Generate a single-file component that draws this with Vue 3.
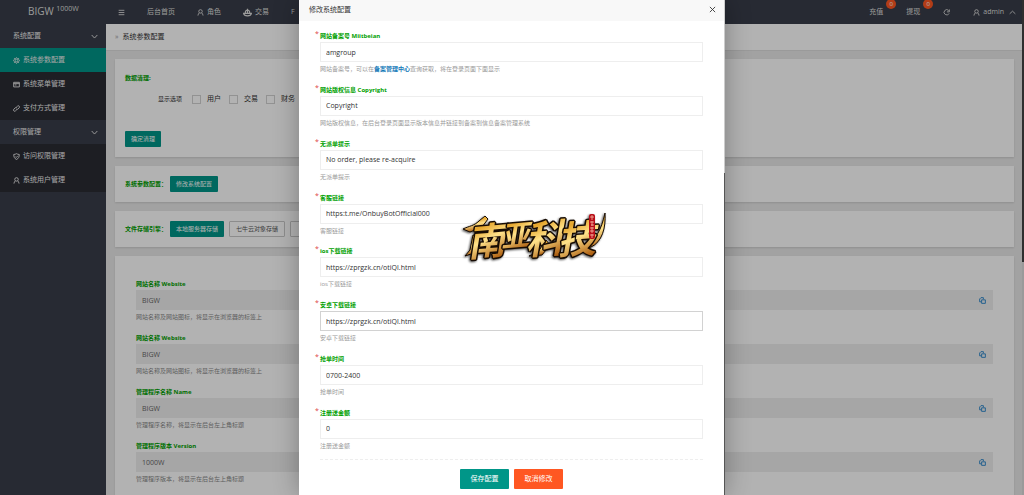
<script setup>
import { ref } from 'vue'

const groups = [
  { name: '系统配置', items: [
    { name: '系统参数配置', icon: 'gear', active: true },
    { name: '系统菜单管理', icon: 'window' },
    { name: '支付方式管理', icon: 'link' },
  ] },
  { name: '权限管理', items: [
    { name: '访问权限管理', icon: 'shield' },
    { name: '系统用户管理', icon: 'user' },
  ] },
]

const icons = {
  gear: 'M8 1.5l2 1.8 2.700 0 .3 2.500 1.800 2.200-1.800 2.200-.3 2.500-2.700 0-2 1.800-2-1.800-2.700 0-.3-2.500L1.200 8 3 5.800l.3-2.500 2.700 0zM8 5a3 3 0 1 0 0 6 3 3 0 0 0 0-6z',
  window: 'M1.500 3h13v10.500h-13zM1.500 6h13M4 9h4',
  link: 'M7 9.500a3 3 0 0 0 4 0l3-3a2.500 2.500 0 0 0-4-4L8.500 4M9 6.500a3 3 0 0 0-4 0l-3 3a2.500 2.500 0 0 0 4 4L7.500 12',
  shield: 'M8 1.500c2 1.300 4 1.800 6.300 1.800 0 5.500-1.300 9-6.300 11.500-5-2.500-6.300-6-6.300-11.500C4 3.300 6 2.800 8 1.500zM5 8l2.300 2.300L11 6.500',
  user: 'M8 1.500a4 4 0 1 0 0 8 4 4 0 0 0 0-8M5.500 8.800C3.500 10 2.500 12 2.200 15M10.500 8.800c2 1.200 3 3.200 3.300 6.200',
  scale: 'M1 9.500h14c-.5 3-3 4.500-7 4.500s-6.500-1.500-7-4.500zM8 1.500v8M4 9c0-4 1.500-5.500 4-5.500S12 5 12 9',
  menu: 'M1.500 3h13M1.500 8h13M1.500 13h13',
  refresh: 'M14 10a6 6 0 1 1-1-6.500M14.500 1v5.500H9',
  down: 'M1.500 4.500l6.500 7 6.500-7',
  up: 'M1.500 11L8 5l6.500 6',
  close: 'M2 2l12 12M14 2L2 14',
  copy: 'M5 11H1.500V4.500L4.500 1.500H10V5M6 6.500h8.500v8H6z',
}

const options = ref([
  { name: '用户', checked: false },
  { name: '交易', checked: false },
  { name: '财务', checked: false },
])

const params = [
  { name: '网站名称 Website', value: 'BIGW', help: '网站名称及网站图标，将显示在浏览器的标签上' },
  { name: '网站名称 Website', value: 'BIGW', help: '网站名称及网站图标，将显示在浏览器的标签上' },
  { name: '管理程序名称 Name', value: 'BIGW', help: '管理程序名称，将显示在后台左上角标题' },
  { name: '管理程序版本 Version', value: '1000W', help: '管理程序版本，将显示在后台左上角标题' },
]

const fields = ref([
  { name: '网站备案号 Miitbeian', value: 'amgroup', help: '网站备案号，可以在', link: '备案管理中心', rest: '查询获取，将在登录页面下面显示' },
  { name: '网站版权信息 Copyright', value: 'Copyright', help: '网站版权信息，在后台登录页面显示版本信息并链接到备案到信息备案管理系统' },
  { name: '无派单提示', value: 'No order, please re-acquire', help: '无派单提示' },
  { name: '客服链接', value: 'https:t.me/OnbuyBotOfficial000', help: '客服链接' },
  { name: 'ios下载链接', value: 'https://zprgzk.cn/otiQl.html', help: 'ios下载链接' },
  { name: '安卓下载链接', value: 'https://zprgzk.cn/otiQl.html', help: '安卓下载链接', focus: true },
  { name: '抢单时间', value: '0700-2400', help: '抢单时间' },
  { name: '注册送金额', value: '0', help: '注册送金额' },
])
</script>

<template>
  <div class="app">
    <aside class="side">
      <div class="brand">BIGW <sup>1000W</sup></div>
      <nav>
        <section v-for="g in groups" :key="g.name">
          <button class="group" type="button">{{ g.name }}
            <svg class="icon" viewBox="0 0 16 16"><path :d="icons.down" /></svg>
          </button>
          <a v-for="i in g.items" :key="i.name" href="#" class="item" :class="{ active: i.active }">
            <svg class="icon" viewBox="0 0 16 16"><path :d="icons[i.icon]" /></svg>{{ i.name }}
          </a>
        </section>
      </nav>
    </aside>

    <div class="main">
      <header class="top">
        <button type="button" class="toggle" aria-label="菜单"><svg class="icon" viewBox="0 0 16 16"><path :d="icons.menu" /></svg></button>
        <a href="#">后台首页</a>
        <a href="#"><svg class="icon" viewBox="0 0 16 16"><path :d="icons.user" /></svg>角色</a>
        <a href="#"><svg class="icon wide" viewBox="0 0 16 16"><path :d="icons.scale" /></svg>交易</a>
        <a href="#">F</a>
        <div class="tools">
          <a href="#" class="counted">充值<span class="badge">0</span></a>
          <a href="#" class="counted">提现<span class="badge">0</span></a>
          <button type="button" aria-label="刷新"><svg class="icon" viewBox="0 0 16 16"><path :d="icons.refresh" /></svg></button>
          <a href="#" class="account"><svg class="icon" viewBox="0 0 16 16"><path :d="icons.user" /></svg>admin<svg class="icon caret" viewBox="0 0 16 16"><path :d="icons.up" /></svg></a>
        </div>
      </header>
      <div class="crumb"><span>»</span>系统参数配置</div>

      <div class="content">
        <section class="card">
          <h2>数据清理:</h2>
          <div class="options">
            <span class="caption">显示选项</span>
            <label v-for="o in options" :key="o.name"><input v-model="o.checked" type="checkbox">{{ o.name }}</label>
          </div>
          <button type="button" class="btn">确定清理</button>
        </section>
        <section class="card line">
          <h2>系统参数配置：</h2>
          <button type="button" class="btn">修改系统配置</button>
        </section>
        <section class="card line">
          <h2>文件存储引擎：</h2>
          <button type="button" class="btn">本地服务器存储</button>
          <button type="button" class="btn plain">七牛云对象存储</button>
          <button type="button" class="btn plain more" aria-label="更多"></button>
        </section>
        <section class="card params">
          <div v-for="(p, n) in params" :key="n" class="field">
            <label :for="'param' + n">{{ p.name }}</label>
            <div class="locked">
              <input :id="'param' + n" type="text" :value="p.value" readonly>
              <button type="button" aria-label="复制"><svg class="icon" viewBox="0 0 16 16"><path :d="icons.copy" /></svg></button>
            </div>
            <p>{{ p.help }}</p>
          </div>
        </section>
      </div>
    </div>
    <div class="page-bar"><i></i></div>

    <div class="shade">
      <div class="modal" role="dialog" aria-labelledby="dialog-title">
        <div class="modal-head">
          <h1 id="dialog-title">修改系统配置</h1>
          <button type="button" aria-label="关闭"><svg class="icon" viewBox="0 0 16 16"><path :d="icons.close" /></svg></button>
        </div>
        <form @submit.prevent>
          <div class="fields">
            <div v-for="(f, n) in fields" :key="n" class="field required">
              <label :for="'field' + n">{{ f.name }}</label>
              <input :id="'field' + n" v-model="f.value" type="text" :class="{ focus: f.focus }">
              <p>{{ f.help }}<a v-if="f.link" href="#">{{ f.link }}</a>{{ f.rest }}</p>
            </div>
          </div>
          <div class="actions">
            <button type="submit" class="btn large">保存配置</button>
            <button type="button" class="btn large cancel">取消修改</button>
          </div>
        </form>
        <div class="modal-bar"><i></i></div>

        <svg class="mark" viewBox="0 0 150 54" role="img" aria-label="南亚科技">
          <defs>
            <linearGradient id="gold" x1="0" y1="0" x2="0.300" y2="1">
              <stop offset="0" stop-color="#fff0a0" />
              <stop offset="0.350" stop-color="#e5a52c" />
              <stop offset="0.600" stop-color="#ffe28a" />
              <stop offset="1" stop-color="#a9590c" />
            </linearGradient>
          </defs>
          <g class="strokes">
            <path d="M3 20c6-3 11-3 16-8l6-5 3 3-6 8-12 5z" />
            <path d="M13 26l-3 15-5 6 9-3 4-16z" />
            <path d="M86 31l-8 12-9 4 13-1 8-10z" />
            <path d="M145 4c1 15-3 29-14 34l-18 7 13-10c10-5 15-13 19-31z" />
          </g>
          <g class="glyphs">
            <text x="7" y="46" font-size="38" transform="rotate(-5 27 32)">南</text>
            <text x="41" y="37" font-size="29" transform="rotate(-5 58 28)">亚</text>
            <text x="65" y="44" font-size="39" transform="rotate(-4 87 30)">科</text>
            <text x="97" y="44" font-size="38" transform="rotate(-4 120 31)">技</text>
          </g>
          <rect x="129" y="5" width="6" height="25" rx="2" fill="#b80d18" />
          <path class="seal" d="M130 8h4M132 6v5M130 13h4M131 16h3M132 12v5M130 19h4M130 22h4M132 18v6M130 26h4M132 25v4" />
        </svg>
      </div>
    </div>
  </div>
</template>

<style>
body { margin: 0; overflow: hidden; }
</style>

<style scoped>
* { box-sizing: border-box; }
.app {
  display: flex;
  position: relative;
  height: 100vh;
  overflow: hidden;
  background: #e9e9e9;
  color: #333;
  font: 7px/10px "Open Sans", "Noto Sans CJK SC", sans-serif;
}
button, input { font: inherit; color: inherit; margin: 0; }
button { padding: 0; border: 0; background: none; }
a { color: inherit; text-decoration: none; }
h1, h2, p { margin: 0; font: inherit; }
.icon { width: 7px; height: 7px; flex: none; fill: none; stroke: currentColor; stroke-width: 2; }
.icon.wide { width: 9px; height: 9px; }

.side { width: 106px; flex: none; background: #393d49; color: #eee; }
.brand { height: 24px; padding: 0 0 0 28px; font-size: 10px; line-height: 22px; white-space: nowrap; color: #ddd; }
.brand sup { font-size: 7px; line-height: 0; vertical-align: 4px; }
.group, .item { display: flex; align-items: center; width: 100%; height: 24px; padding: 0 8px 0 13px; }
.group { justify-content: space-between; }
.item { gap: 3px; background: #2a2b33; }
.item.active { background: #009688; }

.main { flex: 1; min-width: 0; display: flex; flex-direction: column; }
.top { display: flex; align-items: center; gap: 22px; flex: none; height: 24px; padding: 0 8px 0 12px; background: #393d49; color: #ddd; }
.top a { display: flex; align-items: center; gap: 3px; white-space: nowrap; }
.top button, .locked button { display: flex; }
.tools { display: flex; align-items: center; gap: 23px; margin-left: auto; }
.counted { position: relative; }
.badge { position: absolute; left: 17px; top: -8px; width: 10px; height: 10px; border-radius: 50%; background: #ff5722; color: #fff; font-size: 6px; line-height: 10px; text-align: center; }
.account .caret { margin-left: 2px; }
.crumb { display: flex; align-items: center; gap: 4px; flex: none; height: 27px; padding-left: 9px; background: #fff; border-bottom: 1px solid #ddd; }
.crumb span { color: #999; }
.content { display: grid; gap: 9px; padding: 8px 10px 0 9px; }
.card { padding: 14px 10px 10px; background: #fff; box-shadow: 0 1px 2px #ccc; }
.card h2 { font-size: 6px; font-weight: 700; color: #00a000; }
.options { display: flex; align-items: center; gap: 8px; height: 20px; margin: 6px 0 0 33px; }
.options .caption { font-size: 6px; width: 26px; }
.options label { display: flex; align-items: center; gap: 6px; white-space: nowrap; }
.options input { appearance: none; width: 9px; height: 9px; border: 1px solid #d2d2d2; background: #fff; }
.card > .options + .btn { margin-top: 22px; }
.btn { height: 16px; padding: 0 6px; border-radius: 1px; background: #009688; color: #fff; font-size: 6px; white-space: nowrap; }
.btn.plain { border: 1px solid #c9c9c9; background: #fff; color: #555; }
.btn.more { width: 44px; }
.line { display: flex; align-items: center; gap: 5px; height: 36px; padding: 0 10px; }
.line h2 { width: 40px; white-space: nowrap; }
.params { display: grid; gap: 13px; padding: 22px 21px; }

.field label { display: block; height: 12px; font-size: 6px; line-height: 12px; font-weight: 700; color: #00a000; }
.field p { height: 8px; margin-top: 3px; font-size: 6px; line-height: 8px; color: #999; white-space: nowrap; }
.params .field { height: 41px; }
.params .field p { color: #888; }
.locked { display: flex; align-items: center; height: 20px; padding-right: 7px; background: #eee; }
.locked input { flex: 1; min-width: 0; height: 20px; padding: 0 6px; border: 0; background: none; color: #666; outline: 0; }
.locked button { color: #1e7fc8; }
.page-bar { position: absolute; top: 0; right: 0; width: 2px; height: 100%; background: #ddd; }
.page-bar i { display: block; height: 53%; background: #444; }

.shade { position: absolute; inset: 0; display: flex; justify-content: center; background: rgba(0, 0, 0, 0.3); }
.modal { position: relative; display: flex; flex-direction: column; width: 42%; max-width: 426px; height: 100%; background: #fff; box-shadow: 0 0 24px rgba(0, 0, 0, 0.3); }
.modal-head { display: flex; align-items: center; justify-content: space-between; flex: none; height: 21px; padding: 0 9px 2px 10px; background: #f8f8f8; }
.modal-head button { display: flex; }
form { display: flex; flex-direction: column; flex: 1; padding: 9px 22px 6px 21px; }
.fields { display: flex; flex-direction: column; justify-content: space-between; flex: 1; padding-bottom: 9px; border-bottom: 1px dashed #eee; }
.required { position: relative; }
.required::before { content: "*"; position: absolute; left: -5px; top: -1px; color: #d44; font-size: 7px; }
.required input { display: block; width: 100%; height: 20px; padding: 0 5px; border: 1px solid #eee; background: #fff; outline: 0; }
.required input.focus { border-color: #d2d2d2; }
.field p a { color: #1479b8; font-weight: 700; }
.actions { display: flex; justify-content: center; gap: 5px; padding-top: 9px; }
.btn.large { width: 49px; height: 20px; font-size: 7px; }
.btn.cancel { background: #ff5722; }
.modal-bar { position: absolute; top: 0; right: 0; width: 1px; height: 100%; background: #ccc; }
.modal-bar i { position: absolute; top: 35%; bottom: 0; width: 1px; background: #555; }

/* Brand mark floating over the dialog */
.mark { position: absolute; left: 161px; top: 209px; width: 150px; height: 54px; overflow: visible; filter: drop-shadow(-1px 1px 1px rgba(0, 0, 0, 0.7)); }
.glyphs { font-family: "Noto Sans CJK SC", sans-serif; font-weight: 700; font-style: italic; line-height: 1; fill: url(#gold); stroke: #160b03; stroke-width: 3; paint-order: stroke; stroke-linejoin: bevel; }
.strokes { fill: url(#gold); stroke: #160b03; stroke-width: 1; }
.seal { fill: none; stroke: #ffd0b8; stroke-width: 1; opacity: 0.7; }
</style>
